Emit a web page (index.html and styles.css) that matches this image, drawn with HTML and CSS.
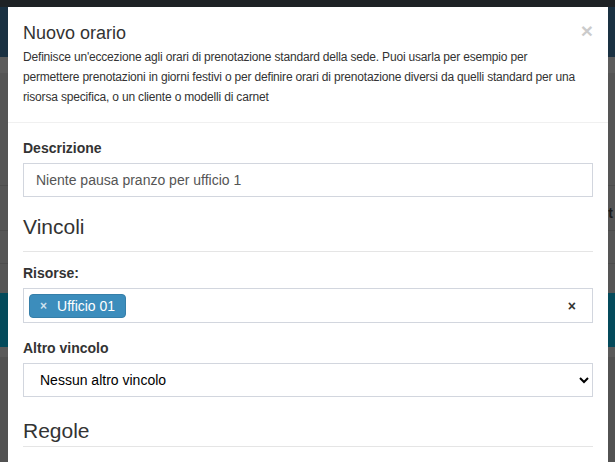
FILE: index.html
```html
<!DOCTYPE html>
<html lang="it">
<head>
<meta charset="utf-8">
<title>Nuovo orario</title>
<link rel="stylesheet" href="styles.css">
</head>
<body>
<div class="page">
  <div class="band band-top"></div>
  <div class="band band-header"></div>
  <div class="band band-sub"></div>
  <div class="band band-main"><span class="peek">t</span></div>
  <div class="band band-teal"></div>
  <div class="band band-sub2"></div>
  <div class="band band-rest"></div>
</div>

<div class="modal">
  <div class="modal-header">
    <button class="close" type="button">×</button>
    <h4 class="modal-title">Nuovo orario</h4>
    <p class="modal-desc">Definisce un'eccezione agli orari di prenotazione standard della sede. Puoi usarla per esempio per<br>permettere prenotazioni in giorni festivi o per definire orari di prenotazione diversi da quelli standard per una<br>risorsa specifica, o un cliente o modelli di carnet</p>
  </div>
  <div class="modal-body">
    <div class="form-group">
      <label class="label">Descrizione</label>
      <input class="form-control" type="text" value="Niente pausa pranzo per ufficio 1">
    </div>
    <h3 class="section-title section-first">Vincoli</h3>
    <div class="form-group">
      <label class="label label-gap">Risorse:</label>
      <div class="tagbox">
        <span class="tag"><span class="tag-x">×</span>Ufficio 01</span>
        <span class="clear">×</span>
      </div>
    </div>
    <div class="form-group">
      <label class="label">Altro vincolo</label>
      <select class="form-select">
        <option>Nessun altro vincolo</option>
      </select>
    </div>
    <h3 class="section-title section-second">Regole</h3>
  </div>
</div>
</body>
</html>
```

FILE: styles.css
```css
html, body {
  margin: 0;
  padding: 0;
  height: 100%;
  overflow: hidden;
}
body {
  background: #525252;
  font-family: "Liberation Sans", Arial, sans-serif;
  color: #333;
}
.page {
  display: flex;
  flex-direction: column;
}
.band { width: 100%; position: relative; }
.band-top { height: 7px; background: #1e2225; }
.band-header { height: 50px; background: #1a3142; }
.band-sub { height: 16px; background: #5c5c5c; }
.band-main {
  height: 220px;
  background: #555555;
  background-image:
    linear-gradient(#4c4c4c, #4c4c4c),
    linear-gradient(#4c4c4c, #4c4c4c),
    linear-gradient(#4c4c4c, #4c4c4c);
  background-size: 100% 1px;
  background-repeat: no-repeat;
  background-position: 0 112px, 0 157px, 0 190px;
}
.peek {
  position: absolute;
  right: 2px;
  top: 132px;
  font: bold 14px "Liberation Sans", Arial, sans-serif;
  color: #1a1a1a;
}
.band-teal { height: 54px; background: #044a5b; }
.band-sub2 { height: 10px; background: #5a5a5a; }
.band-rest { flex: 1; height: 120px; background: #525252; }

.modal {
  position: absolute;
  top: 7px;
  left: 8px;
  width: 600px;
  height: 470px;
  background: #fff;
  box-sizing: border-box;
}
.modal-header {
  padding: 15px;
  border-bottom: 1px solid #f0f0f0;
}
.close {
  float: right;
  margin-top: -2px;
  padding: 0;
  border: 0;
  background: transparent;
  font: bold 21px/1 "Liberation Sans", Arial, sans-serif;
  color: #000;
  opacity: 0.2;
}
.modal-title {
  margin: 2px 0 0;
  font-size: 18px;
  font-weight: normal;
  line-height: 1.1;
  color: #333;
}
.modal-desc {
  margin: 3px 0 0;
  font-size: 12px;
  line-height: 20px;
  letter-spacing: -0.18px;
  white-space: nowrap;
  color: #333;
}
.modal-body {
  padding: 15px;
}
.form-group {
  margin-bottom: 15px;
}
.label {
  display: block;
  font-size: 14px;
  font-weight: bold;
  line-height: 20px;
  margin-bottom: 5px;
  color: #333;
}
.label-gap { margin-top: 11px; }
.form-control {
  display: block;
  box-sizing: border-box;
  width: 100%;
  height: 34px;
  padding: 6px 12px;
  border: 1px solid #d2d6de;
  border-radius: 0;
  font: 14px "Liberation Sans", Arial, sans-serif;
  color: #555;
  background: #fff;
  outline: none;
}
.section-title {
  margin: 0;
  font-size: 21px;
  font-weight: normal;
  line-height: 30px;
  color: #333;
  border-bottom: 1px solid #e5e5e5;
}
.section-first { padding-bottom: 9px; }
.section-second { padding-top: 4px; }

.tagbox {
  box-sizing: border-box;
  height: 35px;
  border: 1px solid #d2d6de;
  padding: 5px 5px;
  display: flex;
  align-items: flex-start;
  justify-content: space-between;
}
.tag {
  display: inline-flex;
  align-items: center;
  box-sizing: border-box;
  height: 24px;
  padding: 0 10px 0 10px;
  background: #3c8dbc;
  border: 1px solid #367fa9;
  border-radius: 4px;
  color: #fff;
  font-size: 14px;
}
.tag-x {
  color: rgba(255, 255, 255, 0.75);
  font-weight: bold;
  font-size: 12px;
  margin-right: 10px;
}
.clear {
  font-weight: bold;
  font-size: 14px;
  color: #333;
  margin: 4px 11px 0 0;
}
.form-select {
  display: block;
  box-sizing: border-box;
  width: 100%;
  height: 34px;
  padding: 6px 12px;
  border: 1px solid #d2d6de;
  border-radius: 0;
  background: #fff;
  font: 14px "Liberation Sans", Arial, sans-serif;
  color: #000;
}
```
